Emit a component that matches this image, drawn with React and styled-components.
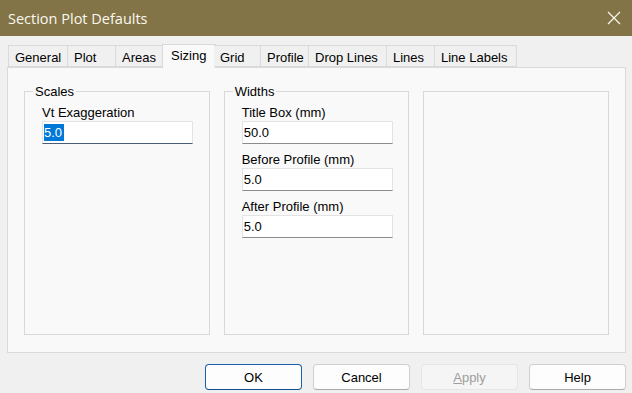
import styled, { createGlobalStyle } from 'styled-components';

const GlobalStyle = createGlobalStyle`
  html, body {
    margin: 0;
    padding: 0;
    background: #f0f0f0;
  }
  * {
    box-sizing: border-box;
  }
`;

const Window = styled.div`
  width: 632px;
  height: 393px;
  background: #f0f0f0;
  font-family: 'Liberation Sans', Arial, sans-serif;
  font-size: 13px;
  color: #000;
  display: flex;
  flex-direction: column;
  overflow: hidden;
`;

const TitleBar = styled.div`
  height: 36px;
  background: #827447;
  display: flex;
  align-items: center;
  justify-content: space-between;
  padding: 0 11px 0 8px;
  color: #fbf8ef;
  font-family: 'Open Sans', 'Noto Sans', sans-serif;
  font-size: 14.5px;
`;

const Body = styled.div`
  flex: 1;
  display: flex;
  flex-direction: column;
  padding: 8px 6px 0 7px;
`;

const TabStrip = styled.div`
  display: flex;
  align-items: flex-end;
  height: 23px;
  padding-left: 1px;
  position: relative;
  z-index: 1;
`;

const Tab = styled.div`
  width: ${(p) => p.w}px;
  height: ${(p) => (p.active ? 24 : 22)}px;
  margin: ${(p) => (p.active ? '0 -2px -1px -2px' : '0')};
  padding: ${(p) => (p.active ? '3px 0 0 8px' : '4px 0 0 6px')};
  background: ${(p) => (p.active ? '#f9f9f9' : '#f0f0f0')};
  border: 1px solid #dadada;
  border-bottom: ${(p) => (p.active ? 'none' : '1px solid #dadada')};
  border-left: ${(p) => (p.first || p.active ? '1px solid #dadada' : 'none')};
  font-size: 13px;
  white-space: nowrap;
`;

const Panel = styled.div`
  height: 286px;
  width: 619px;
  background: #f9f9f9;
  border: 1px solid #dadada;
  display: flex;
  gap: 14px;
  padding: 16px 16px 17px 16px;
`;

const Group = styled.fieldset`
  margin: 0;
  width: 186px;
  border: 1px solid #d8d8d8;
  padding: 6px 0 0 17px;
  display: flex;
  flex-direction: column;
  min-width: 0;
  &:not(:has(legend)) {
    margin-top: 7px;
  }
`;

const Legend = styled.legend`
  padding: 0 2px;
  margin-left: -9px;
  font-size: 13px;
  line-height: 15px;
`;

const Field = styled.div`
  display: flex;
  flex-direction: column;
  margin-bottom: 8px;
`;

const Label = styled.label`
  font-size: 13px;
  line-height: 15px;
  margin-bottom: 1px;
`;

const Input = styled.div`
  width: 151px;
  height: 23px;
  background: #fff;
  border: 1px solid #e3e3e3;
  border-bottom: 1px solid ${(p) => (p.focused ? '#4a5d7a' : '#8c8c8c')};
  padding: 3px 0 0 1px;
  font-size: 13px;
  line-height: 16px;
`;

const Selected = styled.span`
  background: #0078d7;
  color: #fff;
  padding: 1px 2px 1px 0;
`;

const ButtonRow = styled.div`
  display: flex;
  justify-content: flex-end;
  gap: 11px;
  padding: 11px 0 0 0;
`;

const Button = styled.div`
  width: 97px;
  height: 26px;
  border-radius: 4px;
  background: ${(p) => (p.disabled ? '#f5f5f5' : '#fdfdfd')};
  border: 1px solid ${(p) => (p.primary ? '#1a5fa8' : p.disabled ? '#e6e6e6' : '#cfcfcf')};
  border-bottom-color: ${(p) => (p.primary ? '#0f4e90' : p.disabled ? '#e6e6e6' : '#a9a9a9')};
  color: ${(p) => (p.disabled ? '#9d9d9d' : '#000')};
  display: flex;
  align-items: center;
  justify-content: center;
  font-size: 13px;
  u {
    text-decoration: underline;
  }
`;

const tabs = [
  ['General', 60],
  ['Plot', 48],
  ['Areas', 48],
  ['Sizing', 54, true],
  ['Grid', 47],
  ['Profile', 48],
  ['Drop Lines', 78],
  ['Lines', 48],
  ['Line Labels', 82],
];

function CloseIcon() {
  return (
    <svg width="14" height="14" viewBox="0 0 14 14">
      <path d="M1 1 L13 13 M13 1 L1 13" stroke="#fbf8ef" strokeWidth="1.2" fill="none" />
    </svg>
  );
}

const App = () => {
  return (
    <Window>
      <GlobalStyle />
      <TitleBar>
        <span>Section Plot Defaults</span>
        <CloseIcon />
      </TitleBar>
      <Body>
        <TabStrip>
          {tabs.map(([label, w, active], i) => (
            <Tab key={label} w={w} active={active} first={i === 0}>
              {label}
            </Tab>
          ))}
        </TabStrip>
        <Panel>
          <Group>
            <Legend>Scales</Legend>
            <Field>
              <Label>Vt Exaggeration</Label>
              <Input focused>
                <Selected>5.0</Selected>
              </Input>
            </Field>
          </Group>
          <Group>
            <Legend>Widths</Legend>
            <Field>
              <Label>Title Box (mm)</Label>
              <Input>50.0</Input>
            </Field>
            <Field>
              <Label>Before Profile (mm)</Label>
              <Input>5.0</Input>
            </Field>
            <Field>
              <Label>After Profile (mm)</Label>
              <Input>5.0</Input>
            </Field>
          </Group>
          <Group />
        </Panel>
        <ButtonRow>
          <Button primary>OK</Button>
          <Button>Cancel</Button>
          <Button disabled>
            <span><u>A</u>pply</span>
          </Button>
          <Button>Help</Button>
        </ButtonRow>
      </Body>
    </Window>
  );
};

export default App;
